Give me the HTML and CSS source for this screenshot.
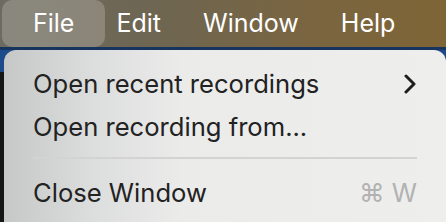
FILE: index.html
```html
<!DOCTYPE html>
<html lang="en">
<head>
  <meta charset="UTF-8" />
  <meta name="viewport" content="width=device-width, initial-scale=1.0" />
  <title>File menu</title>
  <link rel="stylesheet" href="styles.css">
</head>
<body>
  <div class="menubar">
    <span class="menu-title active">File</span>
    <span class="menu-title">Edit</span>
    <span class="menu-title">Window</span>
    <span class="menu-title">Help</span>
  </div>

  <div class="desktop">
    <div class="dropdown">
      <div class="entry">
        <span>Open recent recordings</span>
        <svg class="chevron" width="12" height="20" viewBox="0 0 12 20">
          <path d="M2 2 L10 10 L2 18" fill="none" stroke="#1e1e1e" stroke-width="3" stroke-linecap="round" stroke-linejoin="round"/>
        </svg>
      </div>
      <div class="entry">
        <span>Open recording from...</span>
      </div>
      <div class="separator"></div>
      <div class="entry">
        <span>Close Window</span>
        <span class="shortcut">⌘ W</span>
      </div>
    </div>
  </div>
</body>
</html>
```

FILE: styles.css
```css
body {
  margin: 0;
  font-family: Inter, "Liberation Sans", sans-serif;
  background-color: #161616;
  overflow: hidden;
}
.menubar {
  display: flex;
  align-items: center;
  height: 47px;
  padding-left: 2px;
  background: linear-gradient(90deg, #6d6a5f 0%, #6e6652 35%, #7a6540 70%, #7e6536 100%);
  border-bottom: 3px solid #17345e;
  color: #fff;
  font-size: 25px;
}
.menu-title {
  padding: 0 21px;
  line-height: 47px;
}
.menu-title.active {
  padding: 0 31px;
  margin-right: -10px;
  background: rgba(255, 255, 255, 0.2);
  border-radius: 10px;
}
.desktop {
  height: 172px;
  padding-left: 4px;
  background: linear-gradient(180deg, #1c4a8a 0, #1c4a8a 22px, #161616 22px);
}
.dropdown {
  height: 160px;
  padding: 12px 29px 0 29px;
  background: linear-gradient(90deg, #c6c8c8 0%, #dcdddd 20%, #ebebea 40%, #eeeeed 100%);
  border-radius: 12px 12px 0 0;
  color: #222;
  font-size: 25.6px;
  overflow: hidden;
}
.entry {
  display: flex;
  align-items: center;
  justify-content: space-between;
  height: 43px;
}
.chevron {
  margin-right: 1px;
}
.separator {
  height: 2px;
  margin: 9px 0 12px 0;
  background: #d3d3d3;
}
.shortcut {
  color: #b2b2b2;
}
```
